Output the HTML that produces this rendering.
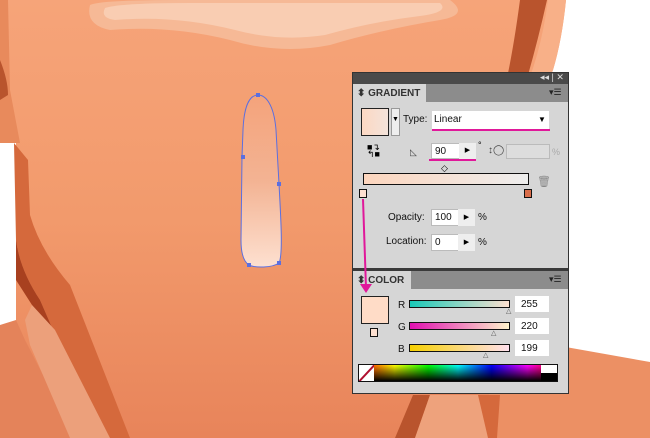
<!DOCTYPE html>
<html><head><meta charset="utf-8"><style>
*{margin:0;padding:0;box-sizing:border-box}
body{width:650px;height:438px;overflow:hidden;position:relative;background:#fff;font-family:"Liberation Sans",sans-serif}
.a{position:absolute}
.p{font-size:10px;color:#111}
.in{background:#fff;border:1px solid #bbb}
</style></head><body>
<svg class="a" style="left:0;top:0" width="650" height="438" viewBox="0 0 650 438">
<defs>
<linearGradient id="f" x1="0" y1="0" x2="0" y2="1"><stop offset="0" stop-color="#f6a479"/><stop offset="0.5" stop-color="#f29a6c"/><stop offset="1" stop-color="#e8845a"/></linearGradient>
<linearGradient id="d" x1="0" y1="0" x2="0" y2="1"><stop offset="0" stop-color="#f4a37b"/><stop offset="0.5" stop-color="#f3b393"/><stop offset="1" stop-color="#fde0d0"/></linearGradient>
</defs>
<rect width="650" height="438" fill="#fff"/>
<path d="M0 0 H566 Q562 40 553 70 L540 100 L540 438 H0 Z" fill="url(#f)"/>
<path d="M548 0 H566 Q562 40 553 70 L540 100 L520 100 Q540 60 548 0Z" fill="#f8b088"/>
<path d="M520 0 H547 Q538 40 528 75 L520 100 L502 100 Q512 60 520 0Z" fill="#b9542d"/>
<path d="M560 346 L650 362 V438 H480 L500 340Z" fill="#ec9064"/>
<path d="M395 438 L413 395 H430 L415 438Z" fill="#b9542d"/>
<path d="M415 438 L430 395 H480 L490 438Z" fill="#eea27c"/>
<path d="M478 395 H500 L497 438 H488Z" fill="#d5693c"/>
<path d="M0 0 H8 L10 90 L20 143 H0Z" fill="#e88a5c"/>
<path d="M0 60 Q8 80 8 95 L0 100Z" fill="#b9542d"/>
<rect x="0" y="143" width="16" height="182" fill="#fff"/>
<path d="M14 143 L28 160 L30 215 Q40 250 70 285 L130 438 H100 L40 300 Q20 270 16 240Z" fill="#d5693c"/>
<path d="M16 240 Q20 270 40 300 L100 438 H88 L32 305 L16 280Z" fill="#a8401f"/>
<path d="M0 325 L16 320 L25 340 L75 438 H0Z" fill="#e4835a"/>
<path d="M25 320 L30 345 L70 438 H110 L55 330 L32 305Z" fill="#eca07b"/>
<path d="M90 5 Q100 0 180 0 L450 0 Q470 15 440 20 Q380 30 330 45 Q280 55 230 40 Q170 25 110 30 Q85 25 90 5Z" fill="#f6b996"/>
<path d="M105 8 Q120 3 190 3 L440 3 Q450 12 420 16 Q370 22 325 35 Q280 42 235 30 Q175 15 115 20 Q100 18 105 8Z" fill="#f9cdb2"/>
<path d="M258 95 C250 95 244 105 243 130 L242 157 L241 240 C241 255 244 262 249 265 C255 268 272 268 279 263 C283 255 281 220 279 184 L276 130 C274 105 266 95 258 95Z" fill="url(#d)" stroke="#5b6fe0" stroke-width="1"/>
<g fill="#5b6fe0"><rect x="256" y="93" width="4" height="4"/><rect x="241" y="155" width="4" height="4"/><rect x="277" y="182" width="4" height="4"/><rect x="247" y="263" width="4" height="4"/><rect x="277" y="261" width="4" height="4"/></g>
</svg>

<div class="a" style="left:352px;top:72px;width:217px;height:322px;background:#d6d6d6;border:1px solid #333"></div>
<div class="a" style="left:353px;top:73px;width:215px;height:11px;background:#4a4a4a"></div>
<div class="a" style="left:540px;top:72px;font-size:9px;color:#ddd">◂◂ | ✕</div>
<div class="a" style="left:353px;top:84px;width:215px;height:18px;background:#8c8c8c"></div>
<div class="a" style="left:353px;top:84px;width:73px;height:18px;background:#d6d6d6"></div>
<div class="a p" style="left:357px;top:88px;font-size:10px;font-weight:bold;color:#333">⬍ GRADIENT</div>
<div class="a" style="left:549px;top:87px;font-size:9px;color:#222">▾☰</div>
<div class="a" style="left:361px;top:108px;width:28px;height:28px;border:1px solid #222;background:linear-gradient(90deg,#fcd8c3,#f3e3da)"></div>
<div class="a" style="left:391px;top:108px;width:9px;height:28px;background:#eee;border:1px solid #999"></div>
<div class="a" style="left:392px;top:116px;font-size:7px">▼</div>
<div class="a p" style="left:403px;top:114px">Type:</div>
<div class="a in" style="left:432px;top:111px;width:117px;height:18px;border:none"></div>
<div class="a p" style="left:434px;top:114px">Linear</div>
<div class="a" style="left:538px;top:115px;font-size:8px">▼</div>
<div class="a" style="left:432px;top:129px;width:118px;height:2px;background:#e0189a"></div>
<div class="a" style="left:367px;top:144px;width:15px;height:15px;font-size:9px;line-height:7px">■↴<br>↰■</div>
<div class="a" style="left:410px;top:147px;font-size:9px;color:#444">◺</div>
<div class="a in" style="left:431px;top:143px;width:45px;height:16px"></div>
<div class="a p" style="left:435px;top:146px">90</div>
<div class="a" style="left:459px;top:143px;width:17px;height:16px;background:#eee;font-size:7px;text-align:center;line-height:16px">▶</div>
<div class="a" style="left:429px;top:159px;width:47px;height:2px;background:#e0189a"></div>
<div class="a" style="left:478px;top:140px;font-size:9px">°</div>
<div class="a" style="left:488px;top:145px;font-size:10px;color:#444">↕◯</div>
<div class="a" style="left:506px;top:144px;width:44px;height:15px;background:#ddd;border:1px solid #bbb"></div>
<div class="a" style="left:552px;top:147px;font-size:9px;color:#aaa">%</div>
<div class="a" style="left:441px;top:163px;font-size:9px">◇</div>
<div class="a" style="left:441px;top:173px;width:18px;height:2px;background:#e0189a"></div>
<div class="a" style="left:363px;top:173px;width:166px;height:12px;border:1px solid #111;background:linear-gradient(90deg,#fcd5bd,#eee)"></div>
<div class="a" style="left:537px;top:175px;font-size:11px;color:#888">🗑</div>
<div class="a" style="left:359px;top:189px;width:8px;height:9px;border:1px solid #111;background:#fde0d0"></div>
<div class="a" style="left:524px;top:189px;width:8px;height:9px;border:1px solid #111;background:#d96d4a"></div>
<div class="a p" style="left:388px;top:212px">Opacity:</div>
<div class="a in" style="left:431px;top:209px;width:44px;height:17px"></div>
<div class="a p" style="left:435px;top:212px">100</div>
<div class="a" style="left:458px;top:209px;width:17px;height:17px;background:#eee;font-size:7px;text-align:center;line-height:17px">▶</div>
<div class="a p" style="left:478px;top:212px">%</div>
<div class="a p" style="left:386px;top:236px">Location:</div>
<div class="a in" style="left:431px;top:234px;width:44px;height:17px"></div>
<div class="a p" style="left:435px;top:237px">0</div>
<div class="a" style="left:458px;top:234px;width:17px;height:17px;background:#eee;font-size:7px;text-align:center;line-height:17px">▶</div>
<div class="a p" style="left:478px;top:237px">%</div>
<div class="a" style="left:353px;top:268px;width:215px;height:3px;background:#3a3a3a"></div>
<div class="a" style="left:353px;top:271px;width:215px;height:18px;background:#8c8c8c"></div>
<div class="a" style="left:353px;top:271px;width:58px;height:18px;background:#d6d6d6"></div>
<div class="a p" style="left:357px;top:275px;font-weight:bold;color:#333">⬍ COLOR</div>
<div class="a" style="left:549px;top:274px;font-size:9px;color:#222">▾☰</div>
<div class="a" style="left:361px;top:296px;width:28px;height:28px;border:1px solid #222;background:#ffdcc7"></div>
<div class="a" style="left:370px;top:328px;width:8px;height:9px;border:1px solid #111;background:#fde0d0"></div>
<div class="a p" style="left:398px;top:300px">R</div>
<div class="a" style="left:409px;top:300px;width:101px;height:8px;border:1px solid #111;background:linear-gradient(90deg,#19c9b8,#fde0d0)"></div>
<div class="a in" style="left:515px;top:296px;width:34px;height:16px;border:none"></div>
<div class="a p" style="left:521px;top:299px">255</div>
<div class="a p" style="left:398px;top:322px">G</div>
<div class="a" style="left:409px;top:322px;width:101px;height:8px;border:1px solid #111;background:linear-gradient(90deg,#e010b0,#fff4cc)"></div>
<div class="a in" style="left:515px;top:318px;width:34px;height:16px;border:none"></div>
<div class="a p" style="left:521px;top:321px">220</div>
<div class="a p" style="left:398px;top:344px">B</div>
<div class="a" style="left:409px;top:344px;width:101px;height:8px;border:1px solid #111;background:linear-gradient(90deg,#f6d000,#ffe0ee)"></div>
<div class="a in" style="left:515px;top:340px;width:34px;height:16px;border:none"></div>
<div class="a p" style="left:521px;top:343px">199</div>
<div class="a" style="left:506px;top:307px;font-size:7px;color:#555">△</div>
<div class="a" style="left:491px;top:329px;font-size:7px;color:#555">△</div>
<div class="a" style="left:483px;top:351px;font-size:7px;color:#555">△</div>
<div class="a" style="left:358px;top:364px;width:200px;height:18px;border:1px solid #111;background:linear-gradient(180deg,transparent,#000),linear-gradient(90deg,#f00,#ff0 18%,#0f0 35%,#0ff 50%,#00f 67%,#f0f 85%,#f00)"></div>
<div class="a" style="left:359px;top:365px;width:15px;height:16px;background:#fff;overflow:hidden"><div style="width:22px;height:2px;background:#b01030;transform:translate(-3px,7px) rotate(-47deg)"></div></div>
<div class="a" style="left:541px;top:365px;width:16px;height:8px;background:#fff"></div>
<div class="a" style="left:541px;top:373px;width:16px;height:8px;background:#000"></div>
<svg class="a" style="left:0;top:0" width="650" height="438"><path d="M363 199 L366 288" stroke="#e0189a" stroke-width="2"/><path d="M360 284 L372 284 L366 293Z" fill="#e0189a"/></svg>
</body></html>
